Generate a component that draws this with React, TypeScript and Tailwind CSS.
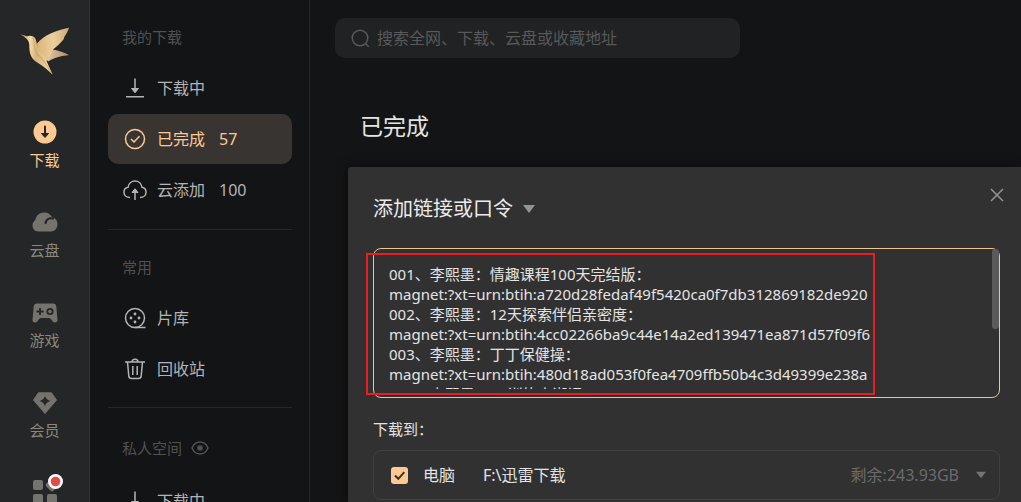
import type { ReactNode } from "react";

const links = [
  "001、李熙墨：情趣课程100天完结版：",
  "magnet:?xt=urn:btih:a720d28fedaf49f5420ca0f7db312869182de920",
  "002、李熙墨：12天探索伴侣亲密度：",
  "magnet:?xt=urn:btih:4cc02266ba9c44e14a2ed139471ea871d57f09f6",
  "003、李熙墨：丁丁保健操：",
  "magnet:?xt=urn:btih:480d18ad053f0fea4709ffb50b4c3d49399e238a",
  "004、李熙墨：K2训练高潮课：",
].join("\n");

function Bird() {
  return (
    <svg width="52" height="50" viewBox="0 0 52 50" aria-hidden="true">
      <defs>
        <linearGradient id="wing" x1="0" y1="0.4" x2="1" y2="0.3">
          <stop offset="0" stopColor="#dcb47c" />
          <stop offset="0.5" stopColor="#ecd09c" />
          <stop offset="1" stopColor="#cdac78" />
        </linearGradient>
        <linearGradient id="tailWing" x1="0" y1="0" x2="1" y2="0">
          <stop offset="0" stopColor="#e6c9a4" />
          <stop offset="0.55" stopColor="#c7a784" />
          <stop offset="1" stopColor="#b09268" />
        </linearGradient>
        <linearGradient id="body" x1="0" y1="0.1" x2="0.9" y2="0.2">
          <stop offset="0" stopColor="#b58e58" />
          <stop offset="0.35" stopColor="#f3dba6" />
          <stop offset="0.6" stopColor="#d8b47c" />
          <stop offset="1" stopColor="#efd39d" />
        </linearGradient>
      </defs>
      <path d="M27 24 34 22.500C40 23.500 45 25.500 50 28 43 29 36 30 29 34.500Z" fill="url(#tailWing)" />
      <path d="M18 16.500C25 8 38 3 50 .8 49 4 47.500 7 45.500 9.500L44.500 12.500C41 17 37 20 34 22.500L28.500 34 19 28Z" fill="url(#wing)" />
      <path d="M1 7.200 8 9.200C10.500 8.200 14 8.400 16 11 17.500 13.500 17.500 17 19 20.500 21 26 27.500 29 28 35L33.500 47.500C26 40 21 37.500 16 34 10 29 10.500 22 10.200 17 9.800 12.500 6 10 1 7.200Z" fill="url(#body)" />
      <path d="M13.500 10.500C17 14 13 22 19 28 24 32 28 38 33 47" fill="none" stroke="#b88d55" strokeOpacity=".45" strokeWidth="1.200" />
    </svg>
  );
}

function RailItem({ label, active, icon }: { label: string; active?: boolean; icon: ReactNode }) {
  return (
    <a
      href="#"
      className={`flex h-[90px] shrink-0 flex-col items-center ${active ? "text-[#fdc993]" : "text-[#75736d]"}`}
    >
      <span className="flex h-7 items-center">{icon}</span>
      <span className={`mt-0.5 text-[15px] leading-6 ${active ? "" : "text-[#8c877e]"}`}>{label}</span>
    </a>
  );
}

function NavItem({ label, count, active, icon }: { label: string; count?: number; active?: boolean; icon: ReactNode }) {
  return (
    <a
      href="#"
      className={`flex h-[50px] shrink-0 items-center rounded-[10px] px-4 text-base ${active ? "bg-[#383431] text-[#fdc993]" : "text-[#b3b4b5]"}`}
    >
      <span className="mr-[11px] flex w-[22px] shrink-0 justify-center">{icon}</span>
      <span className="flex gap-[14px]">
        <span>{label}</span>
        {count !== undefined && <span>{count}</span>}
      </span>
    </a>
  );
}

function DownArrow() {
  return (
    <svg width="22" height="22" viewBox="0 0 22 22" fill="none" stroke="currentColor" strokeWidth="1.500" aria-hidden="true">
      <path d="M11 1.500v13M2 19.800h18" />
      <path d="M7.500 11.500h7L11 15.800Z" fill="currentColor" strokeWidth="1" strokeLinejoin="round" />
    </svg>
  );
}

function Caret({ className }: { className: string }) {
  return (
    <svg width="12" height="8" viewBox="0 0 12 8" className={className} aria-hidden="true">
      <path d="M0 0h12L6 8Z" fill="currentColor" />
    </svg>
  );
}

export default function App() {
  return (
    <div className="flex h-screen overflow-hidden bg-[#131415] font-['Noto_Sans','Noto_Sans_CJK_SC',sans-serif]">
      <aside className="flex w-[90px] shrink-0 flex-col border-r border-[#343536] bg-[#252627]">
        <div className="flex h-[118px] shrink-0 justify-center pt-[27px]">
          <Bird />
        </div>
        <nav className="flex flex-col">
          <RailItem
            label="下载"
            active
            icon={
              <svg width="24" height="24" viewBox="0 0 24 24" aria-hidden="true">
                <circle cx="12" cy="12" r="11.500" fill="currentColor" />
                <path d="M12 6.500v9" stroke="#252627" strokeWidth="2" strokeLinecap="round" />
                <path d="M8.500 13.500h7L12 17.500Z" fill="#252627" stroke="#252627" strokeLinejoin="round" />
              </svg>
            }
          />
          <RailItem
            label="云盘"
            icon={
              <svg width="26" height="20" viewBox="0 0 26 20" aria-hidden="true">
                <path d="M6.500 19.500C2.500 19.500.5 16.500.5 13.500c0-2.500 1-4 2.800-5.500C4 3.500 7.500.5 12 .5c4 0 6.500 1.800 7.800 4.500 3.500.8 5.700 3.700 5.700 7 0 4.500-3 7.500-6.500 7.500Z" fill="currentColor" />
                <path d="M13.500 11c.5-3.500 3.500-5.500 7.500-4.500" fill="none" stroke="#252627" strokeWidth="2.200" strokeLinecap="round" />
              </svg>
            }
          />
          <RailItem
            label="游戏"
            icon={
              <svg width="26" height="22" viewBox="0 -2 26 22" aria-hidden="true">
                <path d="M5 .5h16q3 0 3.300 3l1.200 13.500c.2 2.500-3.500 3.200-4.800 1.500-1.500-2.200-2.300-3.500-4-3.500H9.300c-1.700 0-2.500 1.300-4 3.500C4 20.200.3 19.500.5 17L1.700 3.500Q2 .5 5 .5Z" fill="currentColor" />
                <path d="M4.500 8.500h7M8 5v7" stroke="#252627" strokeWidth="1.800" />
                <circle cx="18" cy="8.500" r="2.700" fill="none" stroke="#252627" strokeWidth="1.800" />
              </svg>
            }
          />
          <RailItem
            label="会员"
            icon={
              <svg width="24" height="24" viewBox="0 -2 24 24" aria-hidden="true">
                <path d="M5.500.8h13l5 7.200L12 21.500.5 8Z" fill="currentColor" stroke="currentColor" strokeLinejoin="round" />
                <path d="M12 4q1.200 4 5.500 5-4.300 1-5.500 5.200Q10.800 10 6.500 9q4.300-1 5.500-5Z" fill="#252627" />
              </svg>
            }
          />
          <a href="#" aria-label="更多" className="flex justify-center text-[#75736d]">
            <svg width="38" height="28" viewBox="0 0 38 28" className="overflow-visible" aria-hidden="true">
              <g fill="currentColor">
                <rect x="7" y="2" width="10" height="10" rx="2" />
                <rect x="7" y="16" width="10" height="10" rx="2" />
                <rect x="21" y="16" width="10" height="10" rx="2" />
                <rect x="21" y="2" width="10" height="10" rx="2" transform="rotate(45 26 7)" />
              </g>
              <circle cx="29.500" cy="3.500" r="7.500" fill="#fff" />
              <circle cx="29.500" cy="3.500" r="4.800" fill="#e24a4b" />
            </svg>
          </a>
        </nav>
      </aside>

      <aside className="flex w-[220px] shrink-0 flex-col border-r border-[#262728] pl-[18px] pr-[17px] pt-[25px]">
        <h2 className="px-[14px] text-[15px] leading-6 text-[#505152]">我的下载</h2>
        <nav className="mt-[14px] flex flex-col gap-px">
          <NavItem label="下载中" icon={<DownArrow />} />
          <NavItem
            label="已完成"
            count={57}
            active
            icon={
              <svg width="22" height="22" viewBox="0 0 22 22" fill="none" stroke="currentColor" strokeWidth="1.500" aria-hidden="true">
                <circle cx="11" cy="11" r="9.500" />
                <path d="m7 11 3 3 5.500-5.800" />
              </svg>
            }
          />
          <NavItem
            label="云添加"
            count={100}
            icon={
              <svg width="24" height="22" viewBox="0 0 24 22" className="shrink-0" fill="none" stroke="currentColor" strokeWidth="1.500" aria-hidden="true">
                <path d="M7 18.500C3.500 18.500 1 16.300 1 13.200 1 10.500 2.800 8.700 5 8.300 5.500 4.500 8.500 2 12 2s6.500 2.500 7 6.300c2.200.4 4 2.200 4 4.900 0 3.100-2.500 5.300-6 5.300" />
                <path d="M12 21V11" />
                <path d="m9 13.500 3-3.800 3 3.800Z" fill="currentColor" strokeWidth="1" strokeLinejoin="round" />
              </svg>
            }
          />
        </nav>
        <hr className="mt-[14px] border-[#262728]" />
        <h2 className="mt-[25px] px-[14px] text-[15px] leading-6 text-[#505152]">常用</h2>
        <nav className="mt-[14px] flex flex-col gap-px">
          <NavItem
            label="片库"
            icon={
              <svg width="22" height="22" viewBox="0 0 22 22" fill="none" stroke="currentColor" strokeWidth="1.500" aria-hidden="true">
                <circle cx="11" cy="11" r="9.500" />
                <path d="M11 20.500h10.500" />
                <g fill="currentColor" stroke="none">
                  <circle cx="11" cy="7" r="1.400" />
                  <circle cx="11" cy="15" r="1.400" />
                  <circle cx="7" cy="11" r="1.400" />
                  <circle cx="15" cy="11" r="1.400" />
                </g>
              </svg>
            }
          />
          <NavItem
            label="回收站"
            icon={
              <svg width="22" height="22" viewBox="0 0 22 22" fill="none" stroke="currentColor" strokeWidth="1.500" aria-hidden="true">
                <path d="M1 4h20M8 4C8 .3 14 .3 14 4M3.500 4 4.800 18q.2 2.500 2.700 2.500h7q2.500 0 2.700-2.500L18.500 4M8.800 8v9M13.200 8v9" />
              </svg>
            }
          />
        </nav>
        <hr className="mt-[13px] border-[#262728]" />
        <h2 className="mt-7 flex items-center px-[14px] text-[15px] leading-6 text-[#505152]">
          私人空间
          <svg width="18" height="14" viewBox="0 0 18 14" className="ml-[9px]" fill="none" stroke="currentColor" strokeWidth="1.500" aria-hidden="true">
            <path d="M1 7C4.500-1 13.500-1 17 7 13.500 15 4.500 15 1 7Z" />
            <circle cx="9" cy="7" r="2.800" fill="currentColor" stroke="none" />
          </svg>
        </h2>
        <nav className="mt-4 flex flex-col">
          <NavItem label="下载中" icon={<DownArrow />} />
        </nav>
      </aside>

      <main className="flex min-w-0 flex-1 flex-col">
        <label className="ml-[25px] mt-[18px] flex h-10 w-[405px] shrink-0 items-center rounded-[10px] bg-[#212223] pl-4 text-[#58595a]">
          <svg width="19" height="19" viewBox="0 0 19 19" fill="none" stroke="currentColor" strokeWidth="1.500" aria-hidden="true">
            <circle cx="9" cy="9" r="7.800" />
            <path d="m14.500 14.500 3.200 3.200" />
          </svg>
          <input
            type="text"
            aria-label="搜索"
            placeholder="搜索全网、下载、云盘或收藏地址"
            className="ml-[7px] min-w-0 flex-1 bg-transparent text-base outline-none placeholder:text-[#58595a]"
          />
        </label>
        <h1 className="ml-[50px] mt-[50px] text-[23px] leading-9 text-[#e4e4e4]">已完成</h1>

        <section className="ml-[38px] mt-[23px] flex flex-1 flex-col rounded-tl-[3px] bg-[#313131] pl-[25px] pr-[21px] shadow-[0_0_12px_#0008]">
          <div className="flex items-start justify-between pt-5">
            <button type="button" className="mt-1 flex items-center text-xl leading-9 text-[#ececec]">
              添加链接或口令
              <Caret className="ml-[10px] text-[#949494]" />
            </button>
            <button type="button" aria-label="关闭" className="-mr-1 text-[#949494]">
              <svg width="14" height="16" viewBox="0 0 14 16" fill="none" stroke="currentColor" strokeWidth="1.500" aria-hidden="true">
                <path d="m1 2 12 12M13 2 1 14" />
              </svg>
            </button>
          </div>

          <div className="relative mt-[21px] h-[150px] shrink-0 rounded-lg border border-[#eec48f] pb-2 pl-[15px] pt-[15px]">
            <textarea
              aria-label="链接或口令"
              defaultValue={links}
              spellCheck={false}
              wrap="off"
              className="block h-full w-full resize-none overflow-hidden bg-transparent text-[15px] leading-5 text-[#e4e4e4] outline-none"
            />
            <div className="absolute right-0 top-0 h-20 w-[7px] rounded-[3px] bg-[#5a5a5a]" />
            <div className="pointer-events-none absolute -left-2 top-1 h-[142px] w-[509px] border-2 border-[#ed1c24]" />
          </div>

          <h2 className="mt-[19px] text-[15px] leading-6 text-[#e4e4e4]">下载到：</h2>
          <div className="mt-[9px] flex h-[50px] shrink-0 items-center rounded-lg border border-[#414141] pl-[17px] pr-[13px] text-base text-[#e4e4e4]">
            <label className="flex items-center">
              <span className="relative flex">
                <input type="checkbox" defaultChecked className="size-[17px] appearance-none rounded-[3px] bg-[#fdc993]" />
                <svg width="17" height="17" viewBox="0 0 17 17" className="pointer-events-none absolute inset-0" fill="none" stroke="#313131" strokeWidth="2" aria-hidden="true">
                  <path d="m4 8.500 3.300 3.300 6-6.600" />
                </svg>
              </span>
              <span className="ml-[15px]">电脑</span>
            </label>
            <span className="ml-7">F:\迅雷下载</span>
            <button type="button" className="ml-auto flex items-center text-[#6b6b6b]">
              剩余:243.93GB
              <Caret className="ml-[17px] w-[10px] text-[#747474]" />
            </button>
          </div>
        </section>
      </main>
    </div>
  );
}
